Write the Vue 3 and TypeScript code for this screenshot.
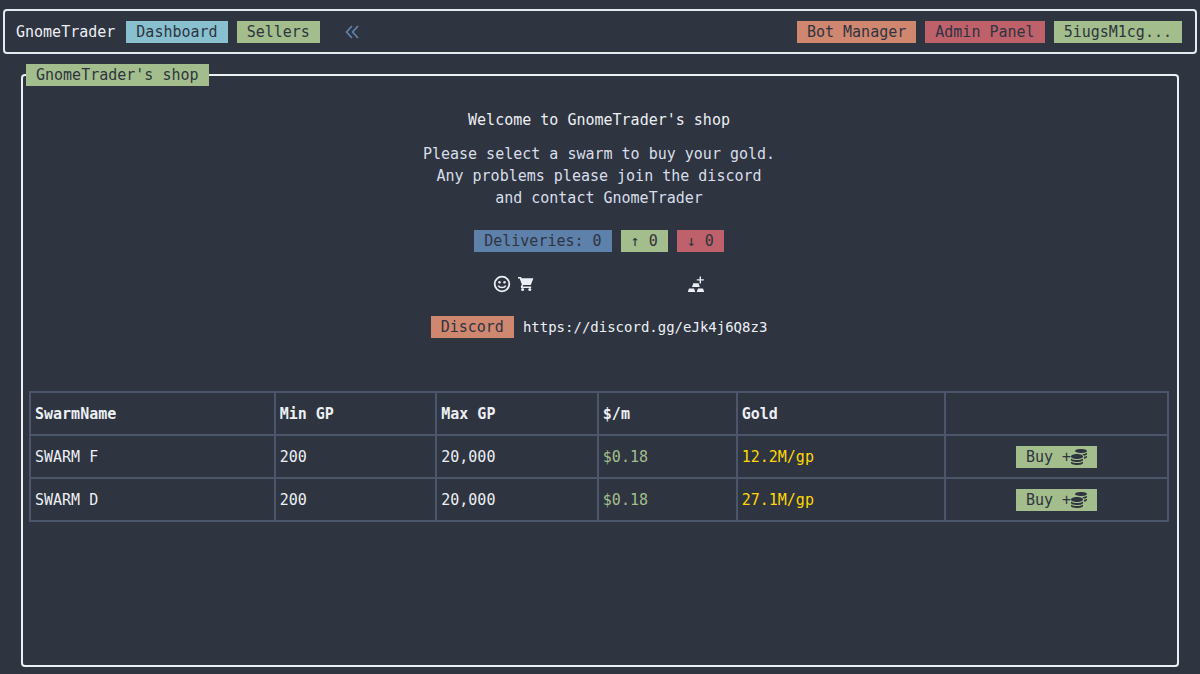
<script setup lang="ts">
interface Swarm {
  name: string
  min: string
  max: string
  price: string
  gold: string
}

const swarms: Swarm[] = [
  { name: 'SWARM F', min: '200', max: '20,000', price: '$0.18', gold: '12.2M/gp' },
  { name: 'SWARM D', min: '200', max: '20,000', price: '$0.18', gold: '27.1M/gp' },
]
</script>

<template>
  <div class="page">
    <nav class="nav">
      <span class="brand">GnomeTrader</span>
      <a class="badge cyan" href="#dashboard">Dashboard</a>
      <a class="badge green" href="#sellers">Sellers</a>
      <button class="collapse" type="button" aria-label="Collapse menu">
        <svg width="14" height="14" viewBox="0 0 14 14" fill="none" stroke="currentColor" stroke-width="1.8">
          <path d="M7 1 1.6 7 7 13M13 1 7.6 7l5.4 6" />
        </svg>
      </button>
      <div class="account">
        <a class="badge orange" href="#bots">Bot Manager</a>
        <a class="badge red" href="#admin">Admin Panel</a>
        <a class="badge green" href="#account">5iugsM1cg...</a>
      </div>
    </nav>

    <fieldset class="shop">
      <legend class="badge green">GnomeTrader's shop</legend>
      <header class="intro">
        <h1>Welcome to GnomeTrader's shop</h1>
        <p>
          Please select a swarm to buy your gold.<br />
          Any problems please join the discord<br />
          and contact GnomeTrader
        </p>
        <div class="row">
          <span class="badge blue">Deliveries: 0</span>
          <span class="badge green">↑ 0</span>
          <span class="badge red">↓ 0</span>
        </div>
        <div class="perks">
          <svg width="18" height="18" viewBox="0 0 18 18" fill="none" stroke="currentColor">
            <circle cx="9" cy="9" r="7.3" stroke-width="1.8" />
            <path d="M5.2 10.6c1.4 2.6 6.2 2.6 7.6 0" stroke-width="1.6" />
            <circle cx="6.5" cy="7.2" r="1.2" fill="currentColor" stroke="none" />
            <circle cx="11.5" cy="7.2" r="1.2" fill="currentColor" stroke="none" />
          </svg>
          <svg class="cart" width="16" height="16" viewBox="0 0 16 16" fill="currentColor">
            <path d="M0 1h3l.7 1.3H15.4L12.8 9H5.2l-.7 1.5h8.7V12H3.2l-.5-1.2 1.2-2.3L1.7 2.5H0z" />
            <circle cx="4.6" cy="13.6" r="1.5" />
            <circle cx="11.8" cy="13.6" r="1.5" />
          </svg>
          <svg class="ingots" width="18" height="18" viewBox="0 0 18 18" fill="currentColor">
            <path d="M.8 17 2 13.4h5L8.3 17zM9.7 17l1.3-3.6h5l1.2 3.6zM5 12l1.3-3.8h5.2l1.3 3.8zM12.6 1.4H14v2.8h2.8v1.4H14v2.8h-1.4V5.6H9.8V4.2h2.8z" />
          </svg>
        </div>
        <div class="row">
          <span class="badge orange">Discord</span>
          <a class="url" href="https://discord.gg/eJk4j6Q8z3">https://discord.gg/eJk4j6Q8z3</a>
        </div>
      </header>

      <table>
        <colgroup>
          <col class="c-name" />
          <col class="c-min" />
          <col class="c-max" />
          <col class="c-price" />
          <col class="c-gold" />
          <col />
        </colgroup>
        <thead>
          <tr>
            <th>SwarmName</th>
            <th>Min GP</th>
            <th>Max GP</th>
            <th>$/m</th>
            <th>Gold</th>
            <th></th>
          </tr>
        </thead>
        <tbody>
          <tr v-for="s in swarms" :key="s.name">
            <td>{{ s.name }}</td>
            <td>{{ s.min }}</td>
            <td>{{ s.max }}</td>
            <td class="price">{{ s.price }}</td>
            <td class="gold">{{ s.gold }}</td>
            <td class="action">
              <button class="badge green buy" type="button">
                <span>Buy +</span>
                <svg width="16" height="16" viewBox="0 0 512 512" fill="currentColor">
                  <path d="M0 405.3V448c0 35.3 86 64 192 64s192-28.7 192-64v-42.7C342.7 434.4 267.2 448 192 448S41.3 434.4 0 405.3zM320 128c106 0 192-28.7 192-64S426 0 320 0 128 28.7 128 64s86 64 192 64zM0 300.4V352c0 35.3 86 64 192 64s192-28.7 192-64v-51.6c-41.3 34-116.9 51.6-192 51.6S41.3 334.4 0 300.4zm416 11c57.3-11.1 96-31.7 96-55.4v-42.7c-23.2 16.4-57.3 27.6-96 34.5v63.6zM192 160C86 160 0 195.8 0 240s86 80 192 80 192-35.8 192-80-86-80-192-80zm219.3 56.3c60-10.8 100.7-32 100.7-56.3v-42.7c-35.5 25.1-96.5 38.6-160.7 41.8 29.5 14.3 51.2 33.5 60 57.2z" />
                </svg>
              </button>
            </td>
          </tr>
        </tbody>
      </table>
    </fieldset>
  </div>
</template>

<style>
body {
  background: #2e3440;
}
</style>

<style scoped>
.page {
  box-sizing: border-box;
  min-height: 100vh;
  padding: 9px 3px 7px;
  display: flex;
  flex-direction: column;
  gap: 10px;
  background: #2e3440;
  color: #eceff4;
  font: 15px/22px "DejaVu Sans Mono", "Liberation Mono", monospace;
}

.nav {
  display: flex;
  align-items: center;
  gap: 9px;
  padding: 10px 13px 9px 11px;
  border: 2px solid #e5e9f0;
  border-radius: 4px;
}

.brand {
  margin-right: 2px;
}

.account,
.row {
  display: flex;
  align-items: center;
  gap: 9px;
}

.account {
  margin-left: auto;
}

.badge {
  display: block;
  padding: 0 10px;
  border: 0;
  color: #2e3440;
  font: inherit;
  text-decoration: none;
  white-space: nowrap;
}

.cyan { background: #88c0d0; }
.green { background: #a3be8c; }
.orange { background: #d08770; }
.red { background: #bf616a; }
.blue { background: #5e81ac; }

.collapse {
  display: flex;
  margin-left: 16px;
  padding: 0;
  border: 0;
  background: none;
  color: #5e81ac;
}

.shop {
  flex: 1;
  min-width: 0;
  margin: 0 18px;
  padding: 23px 8px 0 6px;
  border: 2px solid #eceff4;
  border-radius: 4px;
}

legend {
  margin-left: -3px;
}

.intro {
  display: flex;
  flex-direction: column;
  align-items: center;
  gap: 21px;
  text-align: center;
}

h1 {
  margin: 0 0 -9px;
  font-size: 15px;
  font-weight: 400;
}

p {
  margin: 0;
  color: #d8dee9;
}

.perks {
  display: flex;
  align-items: center;
  width: 212px;
  height: 22px;
}

.cart {
  margin-left: 7px;
}

.ingots {
  margin-left: auto;
}

.url {
  color: #eceff4;
  font-size: 14px;
  text-decoration: none;
}

table {
  width: 100%;
  margin-top: 53px;
  border-collapse: collapse;
  table-layout: fixed;
}

.c-name { width: 21.5%; }
.c-min { width: 14.2%; }
.c-max { width: 14.2%; }
.c-price { width: 12.2%; }
.c-gold { width: 18.3%; }

th,
td {
  height: 41px;
  padding: 0 4px;
  border: 2px solid #4c566a;
  text-align: left;
}

.price { color: #a3be8c; }
.gold { color: #ffd700; }

.buy {
  display: flex;
  align-items: center;
  margin: 0 auto;
}
</style>
